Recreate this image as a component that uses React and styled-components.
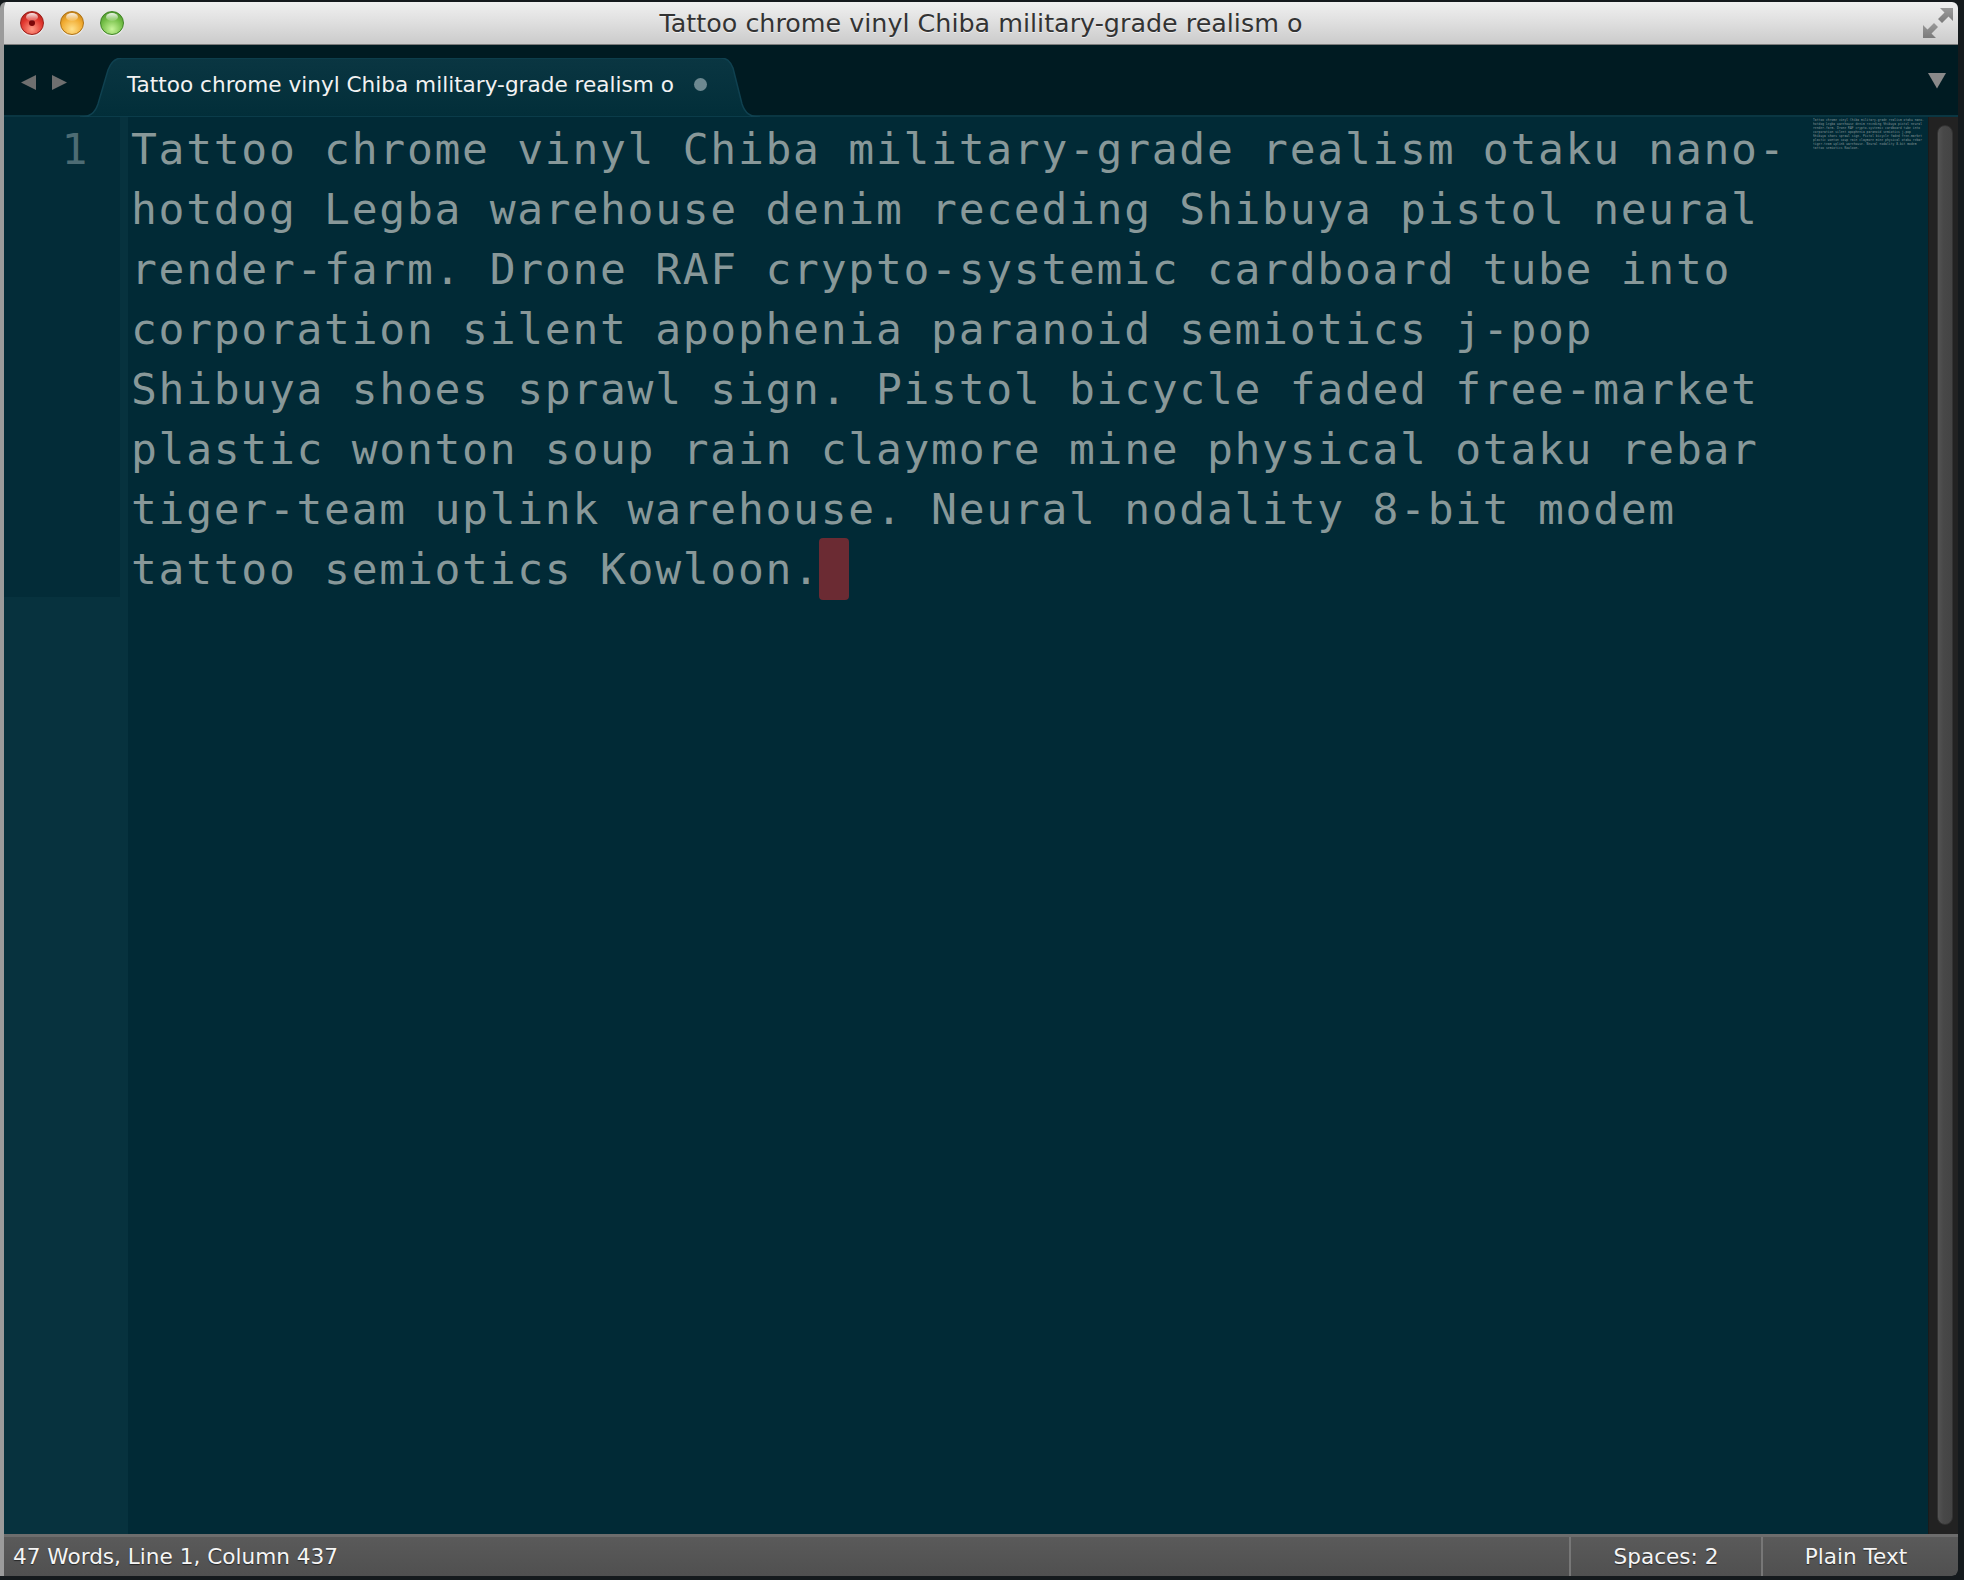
import styled, { createGlobalStyle } from "styled-components";

const GlobalStyle = createGlobalStyle`
  html, body {
    margin: 0;
    padding: 0;
    background: #151a1d;
  }
  body {
    width: 1964px;
    height: 1580px;
    overflow: hidden;
  }
`;

const ROWS = [
  "Tattoo chrome vinyl Chiba military-grade realism otaku nano-",
  "hotdog Legba warehouse denim receding Shibuya pistol neural",
  "render-farm. Drone RAF crypto-systemic cardboard tube into",
  "corporation silent apophenia paranoid semiotics j-pop",
  "Shibuya shoes sprawl sign. Pistol bicycle faded free-market",
  "plastic wonton soup rain claymore mine physical otaku rebar",
  "tiger-team uplink warehouse. Neural nodality 8-bit modem",
  "tattoo semiotics Kowloon.",
];

const TITLE = "Tattoo chrome vinyl Chiba military-grade realism o";

const Page = styled.div`
  width: 1964px;
  height: 1580px;
  box-sizing: border-box;
  padding: 2px 6px 4px 0;
  display: flex;
`;

const Window = styled.div`
  flex: 1;
  display: flex;
  flex-direction: column;
  border-left: 4px solid #9b9b9b;
  border-radius: 6px 6px 6px 0;
  overflow: hidden;
  font-family: "DejaVu Sans", "Liberation Sans", sans-serif;
`;

const TitleBar = styled.div`
  height: 42px;
  flex: none;
  display: grid;
  grid-template-columns: 1fr auto 1fr;
  align-items: center;
  padding: 0 5px;
  background: linear-gradient(#f0f0f0, #e2e2e2 40%, #cbcbcb);
  border-bottom: 1px solid #7c7c7c;
`;

const Lights = styled.div`
  display: flex;
  gap: 16px;
  padding-left: 11px;
`;

const Light = styled.span`
  position: relative;
  width: 22px;
  height: 22px;
  border-radius: 50%;
  border: 1px solid ${({ $edge }) => $edge};
  background: radial-gradient(
    circle at 50% 78%,
    ${({ $glow }) => $glow} 0%,
    ${({ $base }) => $base} 55%,
    ${({ $edge }) => $edge} 100%
  );
  box-shadow: 0 1px 1px rgba(255, 255, 255, 0.7);

  &::after {
    content: "";
    position: absolute;
    left: 5px;
    top: 1px;
    width: 12px;
    height: 8px;
    border-radius: 50%;
    background: linear-gradient(rgba(255, 255, 255, 0.9), rgba(255, 255, 255, 0.1));
  }

  &::before {
    content: "";
    display: ${({ $dot }) => ($dot ? "block" : "none")};
    position: absolute;
    left: 8px;
    top: 8px;
    width: 6px;
    height: 6px;
    border-radius: 50%;
    background: #7c0609;
  }
`;

const Title = styled.div`
  font-size: 25.4px;
  color: #333;
  text-shadow: 0 1px 0 rgba(255, 255, 255, 0.6);
  white-space: nowrap;
`;

const TitleRight = styled.div`
  display: flex;
  justify-content: flex-end;
`;

const TabBar = styled.div`
  height: 70px;
  flex: none;
  display: flex;
  align-items: flex-end;
  background: #001b22;
  border-bottom: 2px solid #0a3642;
`;

const Nav = styled.div`
  width: 76px;
  flex: none;
  box-sizing: border-box;
  padding: 4px 0 0 17px;
  align-self: stretch;
  display: flex;
  align-items: center;
  gap: 16px;
`;

const Tab = styled.div`
  position: relative;
  width: 680px;
  height: 59px;
  margin-bottom: -2px;
  display: flex;
  align-items: center;
  gap: 20px;
  padding: 0 0 6px 47px;
  box-sizing: border-box;
`;

const TabShape = styled.svg`
  position: absolute;
  inset: 0;
  width: 100%;
  height: 100%;
`;

const TabLabel = styled.span`
  position: relative;
  font-size: 21.6px;
  color: #f2f2f2;
  white-space: nowrap;
`;

const TabDot = styled.span`
  position: relative;
  width: 13px;
  height: 13px;
  border-radius: 50%;
  background: #6d8991;
`;

const TabMenu = styled.div`
  margin-left: auto;
  margin-right: 12px;
  align-self: center;
  padding-top: 3px;
  display: flex;
`;

const Editor = styled.div`
  flex: 1;
  min-height: 0;
  display: flex;
  background: #012a36;
`;

const Gutter = styled.div`
  width: 124px;
  flex: none;
  background: #07323e;
`;

const GutterActive = styled.div`
  margin-right: 8px;
  height: 480px;
  box-sizing: border-box;
  padding: 2px 31px 0 0;
  text-align: right;
  background: #032c38;
`;

const Row = styled.div`
  height: 60px;
  line-height: 60px;
  white-space: pre;
  font-family: "DejaVu Sans Mono", "Liberation Mono", monospace;
  font-size: 43px;
  letter-spacing: 1.7px;
  color: ${({ $dim }) => ($dim ? "#4d6c74" : "#889899")};
`;

const Cursor = styled.span`
  display: inline-block;
  vertical-align: top;
  width: 30px;
  height: 62px;
  margin: -1px 0 -1px -2px;
  border-radius: 4px;
  background: #6b2b33;
`;

const TextArea = styled.div`
  flex: 1;
  min-width: 0;
  padding: 2px 0 0 3px;
  overflow: hidden;
`;

const Minimap = styled.div`
  width: 115px;
  flex: none;
  padding: 1px 0 0 13px;
  overflow: hidden;
`;

const MiniScale = styled.div`
  width: max-content;
  transform: scale(0.067);
  transform-origin: 0 0;
`;

const Track = styled.div`
  width: 30px;
  flex: none;
  box-sizing: border-box;
  display: flex;
  padding: 8px 5px 9px 8px;
  background: #222;
  border-left: 1px solid #1b1b1b;
`;

const Thumb = styled.div`
  flex: 1;
  border-radius: 9px;
  background: linear-gradient(90deg, #535353, #484848 40%, #444);
  border: 1px solid #333;
`;

const StatusBar = styled.div`
  height: 39px;
  flex: none;
  display: flex;
  align-items: stretch;
  border-top: 3px solid #6d6d6d;
  background: linear-gradient(#5a5a5a, #505050);
  border-radius: 0 0 6px 0;
  font-size: 21.6px;
  color: #f5f5f5;
  text-shadow: 0 1px 1px rgba(0, 0, 0, 0.55);
`;

const StatusText = styled.div`
  flex: 1;
  display: flex;
  align-items: center;
  padding-left: 9px;
`;

const StatusCell = styled.div`
  width: ${({ $w }) => $w}px;
  box-sizing: border-box;
  padding-right: ${({ $pr = 0 }) => $pr}px;
  display: flex;
  align-items: center;
  justify-content: center;
  border-left: 2px solid #777;
`;

function Triangle({ dir, size = 15, color = "#6f6f6f" }) {
  const points = {
    left: "14,0 14,14 0,7",
    right: "0,0 0,14 14,7",
    down: "0,0 14,0 7,12",
  }[dir];
  return (
    <svg width={size} height={size} viewBox="0 0 14 14">
      <polygon points={points} fill={color} />
    </svg>
  );
}

function FullscreenIcon() {
  return (
    <svg width="30" height="30" viewBox="0 0 30 30">
      <defs>
        <linearGradient id="fs" x1="0" y1="0" x2="0" y2="1">
          <stop offset="0" stopColor="#9a9a9a" />
          <stop offset="1" stopColor="#7a7a7a" />
        </linearGradient>
      </defs>
      <path d="M30 0 L30 13 L25.5 8.5 L19 15 L15 11 L21.5 4.5 L17 0 Z" fill="url(#fs)" />
      <path d="M0 30 L0 17 L4.5 21.5 L11 15 L15 19 L8.5 25.5 L13 30 Z" fill="url(#fs)" />
    </svg>
  );
}

function Lines({ cursor }) {
  return ROWS.map((row, i) => (
    <Row key={i}>
      {row}
      {cursor && i === ROWS.length - 1 && <Cursor />}
    </Row>
  ));
}

export default function App() {
  return (
    <>
      <GlobalStyle />
      <Page>
        <Window>
          <TitleBar>
            <Lights>
              <Light $base="#e0342c" $glow="#ff9a86" $edge="#9c1d18" $dot />
              <Light $base="#f0a92e" $glow="#ffe08a" $edge="#b07212" />
              <Light $base="#72bd45" $glow="#c8f59a" $edge="#3f8524" />
            </Lights>
            <Title>{TITLE}</Title>
            <TitleRight>
              <FullscreenIcon />
            </TitleRight>
          </TitleBar>

          <TabBar>
            <Nav>
              <Triangle dir="left" />
              <Triangle dir="right" />
            </Nav>
            <Tab>
              <TabShape viewBox="0 0 680 59" preserveAspectRatio="none">
                <defs>
                  <linearGradient id="tabfill" x1="0" y1="0" x2="0" y2="1">
                    <stop offset="0" stopColor="#0a3642" />
                    <stop offset="1" stopColor="#022e39" />
                  </linearGradient>
                </defs>
                <path
                  d="M0 59 C10 59 15 55 18 46 L28 12 C31 4 35 0 42 0 L640 0 C647 0 650 3 653 10 L662 46 C665 55 670 59 680 59 Z"
                  fill="url(#tabfill)"
                  stroke="#0f4150"
                  strokeWidth="1.5"
                />
              </TabShape>
              <TabLabel>{TITLE}</TabLabel>
              <TabDot />
            </Tab>
            <TabMenu>
              <Triangle dir="down" size={18} color="#8a8a8a" />
            </TabMenu>
          </TabBar>

          <Editor>
            <Gutter>
              <GutterActive>
                <Row $dim>1</Row>
              </GutterActive>
            </Gutter>
            <TextArea>
              <Lines cursor />
            </TextArea>
            <Minimap>
              <MiniScale>
                <Lines />
              </MiniScale>
            </Minimap>
            <Track>
              <Thumb />
            </Track>
          </Editor>

          <StatusBar>
            <StatusText>47 Words, Line 1, Column 437</StatusText>
            <StatusCell $w={192}>Spaces: 2</StatusCell>
            <StatusCell $w={197} $pr={9}>Plain Text</StatusCell>
          </StatusBar>
        </Window>
      </Page>
    </>
  );
}
